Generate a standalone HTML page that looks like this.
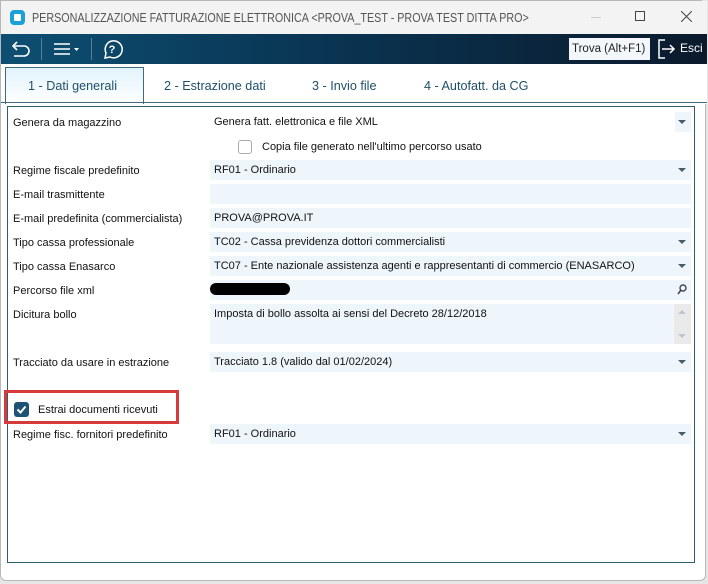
<!DOCTYPE html>
<html><head><meta charset="utf-8"><style>
*{box-sizing:border-box;margin:0;padding:0}
body{width:708px;height:584px;background:#e6e6e6;font-family:"Liberation Sans",sans-serif;font-size:11px;color:#111;position:relative;overflow:hidden}
.win{position:absolute;left:0;top:0;width:706px;height:581px;background:#fff;border:1px solid #b8b8b8;border-radius:0 6px 6px 6px}
.title{position:absolute;left:0;top:0;width:706px;height:33px;background:#f3f3f3}
.title .t{position:absolute;left:31px;top:10px;font-size:12.5px;color:#555;transform:scaleX(.86);transform-origin:0 0;white-space:nowrap}
.tb{position:absolute;left:0;top:33px;width:706px;height:30px;background:linear-gradient(90deg,#0d4f72,#0a3553 45%,#0b1a2c)}
.sep{position:absolute;top:4px;width:1px;height:22px;background:#5a7f96}
.find{position:absolute;left:568px;top:37px;width:81px;height:22px;background:#f3f7fb;font-size:11.5px;padding:5px 0 0 3px;color:#222}
.tabs{position:absolute;left:0;top:63px;width:706px;height:40px;background:#fff}
.tab{position:absolute;top:14px;font-size:13px;color:#1e4f6a;transform:scaleX(.97);transform-origin:0 0}
.atab{position:absolute;left:4px;top:3px;width:139px;height:37px;border:1px solid #3d6b7c;border-bottom:none;background:linear-gradient(#e2f3fc,#fff)}
.line{position:absolute;left:0;top:101px;width:706px;height:1px;background:#3d6b7c}
.panel{position:absolute;left:6px;top:105px;width:688px;height:457px;border:1.5px solid #2f6070}
.lbl{position:absolute;left:12px;font-size:11px}
.f{position:absolute;left:209px;width:481px;height:20px;background:#eef6fc;font-size:11px;padding:4px 0 0 4px;white-space:nowrap}
.arr{position:absolute;right:5px;top:8px;width:0;height:0;border-left:4px solid transparent;border-right:4px solid transparent;border-top:4px solid #4a5a6e}
</style></head><body>
<div class="win">
<div class="title">
<div style="position:absolute;left:9px;top:9px;width:15px;height:15px;border-radius:4px;background:#1ba1d8"><div style="position:absolute;left:4px;top:4px;width:7px;height:7px;background:#fff;border-radius:1px"></div></div>
<div class="t">PERSONALIZZAZIONE FATTURAZIONE ELETTRONICA &lt;PROVA_TEST - PROVA TEST DITTA PRO&gt;</div>
<div style="position:absolute;left:590px;top:16px;width:10px;height:1px;background:#ccc"></div>
<div style="position:absolute;left:634px;top:10px;width:10px;height:10px;border:1px solid #444"></div>
<svg style="position:absolute;left:680px;top:10px" width="11" height="11"><path d="M0 0L11 11M11 0L0 11" stroke="#444" stroke-width="1"/></svg>
</div>
<div class="tb">
<svg style="position:absolute;left:10px;top:6px" width="20" height="18"><path d="M6 2L2 6L6 10M2 6H13a5 5 0 0 1 0 10H3" fill="none" stroke="#fff" stroke-width="1.6"/></svg>
<div class="sep" style="left:40px"></div>
<svg style="position:absolute;left:53px;top:8px" width="26" height="14"><path d="M0 2H16M0 7H16M0 12H16" stroke="#fff" stroke-width="1.5"/><path d="M20 6h5l-2.5 3z" fill="#fff"/></svg>
<div class="sep" style="left:90px"></div>
<svg style="position:absolute;left:100px;top:4px" width="22" height="22"><path d="M4 20L5 15A8.5 8.5 0 1 1 9 19Z" fill="none" stroke="#fff" stroke-width="1.5"/><text x="11" y="15" fill="#fff" font-size="11" font-weight="bold" text-anchor="middle" font-family="Liberation Sans">?</text></svg>
<svg style="position:absolute;left:656px;top:5px" width="20" height="20"><path d="M8 1H2V19H8" fill="none" stroke="#fff" stroke-width="1.5"/><path d="M5 10H17M13 6L17 10L13 14" fill="none" stroke="#fff" stroke-width="1.5"/></svg>
<div style="position:absolute;left:679px;top:7px;color:#fff;font-size:12px">Esci</div>
</div>
<div class="find">Trova (Alt+F1)</div>
<div class="tabs">
<div class="atab"></div>
<div class="tab" style="left:27px">1 - Dati generali</div>
<div class="tab" style="left:163px">2 - Estrazione dati</div>
<div class="tab" style="left:311px">3 - Invio file</div>
<div class="tab" style="left:423px">4 - Autofatt. da CG</div>
</div>
<div class="line"></div>
<div class="panel"></div>

<div class="lbl" style="top:116px">Genera da magazzino</div>
<div class="f" style="top:111px;background:#fff">Genera fatt. elettronica e file XML<div style="position:absolute;right:0;top:0;width:16px;height:20px;background:#eef6fc"></div><div class="arr"></div></div>
<div style="position:absolute;left:237px;top:139px;width:14px;height:14px;border:1px solid #aaa;border-radius:3px;background:#fff"></div>
<div style="position:absolute;left:261px;top:140px">Copia file generato nell'ultimo percorso usato</div>

<div class="lbl" style="top:164px">Regime fiscale predefinito</div>
<div class="f" style="top:159px">RF01 - Ordinario<div class="arr"></div></div>
<div class="lbl" style="top:188px">E-mail trasmittente</div>
<div class="f" style="top:183px"></div>
<div class="lbl" style="top:212px">E-mail predefinita (commercialista)</div>
<div class="f" style="top:207px">PROVA@PROVA.IT</div>
<div class="lbl" style="top:236px">Tipo cassa professionale</div>
<div class="f" style="top:231px">TC02 - Cassa previdenza dottori commercialisti<div class="arr"></div></div>
<div class="lbl" style="top:260px">Tipo cassa Enasarco</div>
<div class="f" style="top:255px">TC07 - Ente nazionale assistenza agenti e rappresentanti di commercio (ENASARCO)<div class="arr"></div></div>
<div class="lbl" style="top:284px">Percorso file xml</div>
<div class="f" style="top:279px"><div style="position:absolute;left:0;top:3px;width:80px;height:12px;border-radius:6px;background:#000"></div>
<svg style="position:absolute;right:4px;top:4px" width="10" height="11"><circle cx="6" cy="4" r="3" fill="none" stroke="#445" stroke-width="1.4"/><path d="M4 6L1 10" stroke="#445" stroke-width="1.6"/></svg></div>
<div class="lbl" style="top:308px">Dicitura bollo</div>
<div class="f" style="top:303px;height:40px">Imposta di bollo assolta ai sensi del Decreto 28/12/2018
<div style="position:absolute;right:0;top:0;width:17px;height:40px;background:#eaeaea"></div>
<div style="position:absolute;right:5px;top:6px;border-left:4px solid transparent;border-right:4px solid transparent;border-bottom:4px solid #c0c4cc"></div>
<div style="position:absolute;right:5px;top:30px;border-left:4px solid transparent;border-right:4px solid transparent;border-top:4px solid #c0c4cc"></div></div>
<div class="lbl" style="top:356px">Tracciato da usare in estrazione</div>
<div class="f" style="top:351px">Tracciato 1.8 (valido dal 01/02/2024)<div class="arr"></div></div>

<div style="position:absolute;left:3px;top:389px;width:175px;height:34px;border:3px solid #d63a3a"></div>
<div style="position:absolute;left:13px;top:401px;width:15px;height:15px;border-radius:3px;background:#1d5475"><svg width="15" height="15"><path d="M3.5 7.5L6.5 10.5L11.5 4.5" fill="none" stroke="#fff" stroke-width="2"/></svg></div>
<div style="position:absolute;left:37px;top:403px">Estrai documenti ricevuti</div>
<div class="lbl" style="top:428px">Regime fisc. fornitori predefinito</div>
<div class="f" style="top:423px">RF01 - Ordinario<div class="arr"></div></div>
</div>
</body></html>
